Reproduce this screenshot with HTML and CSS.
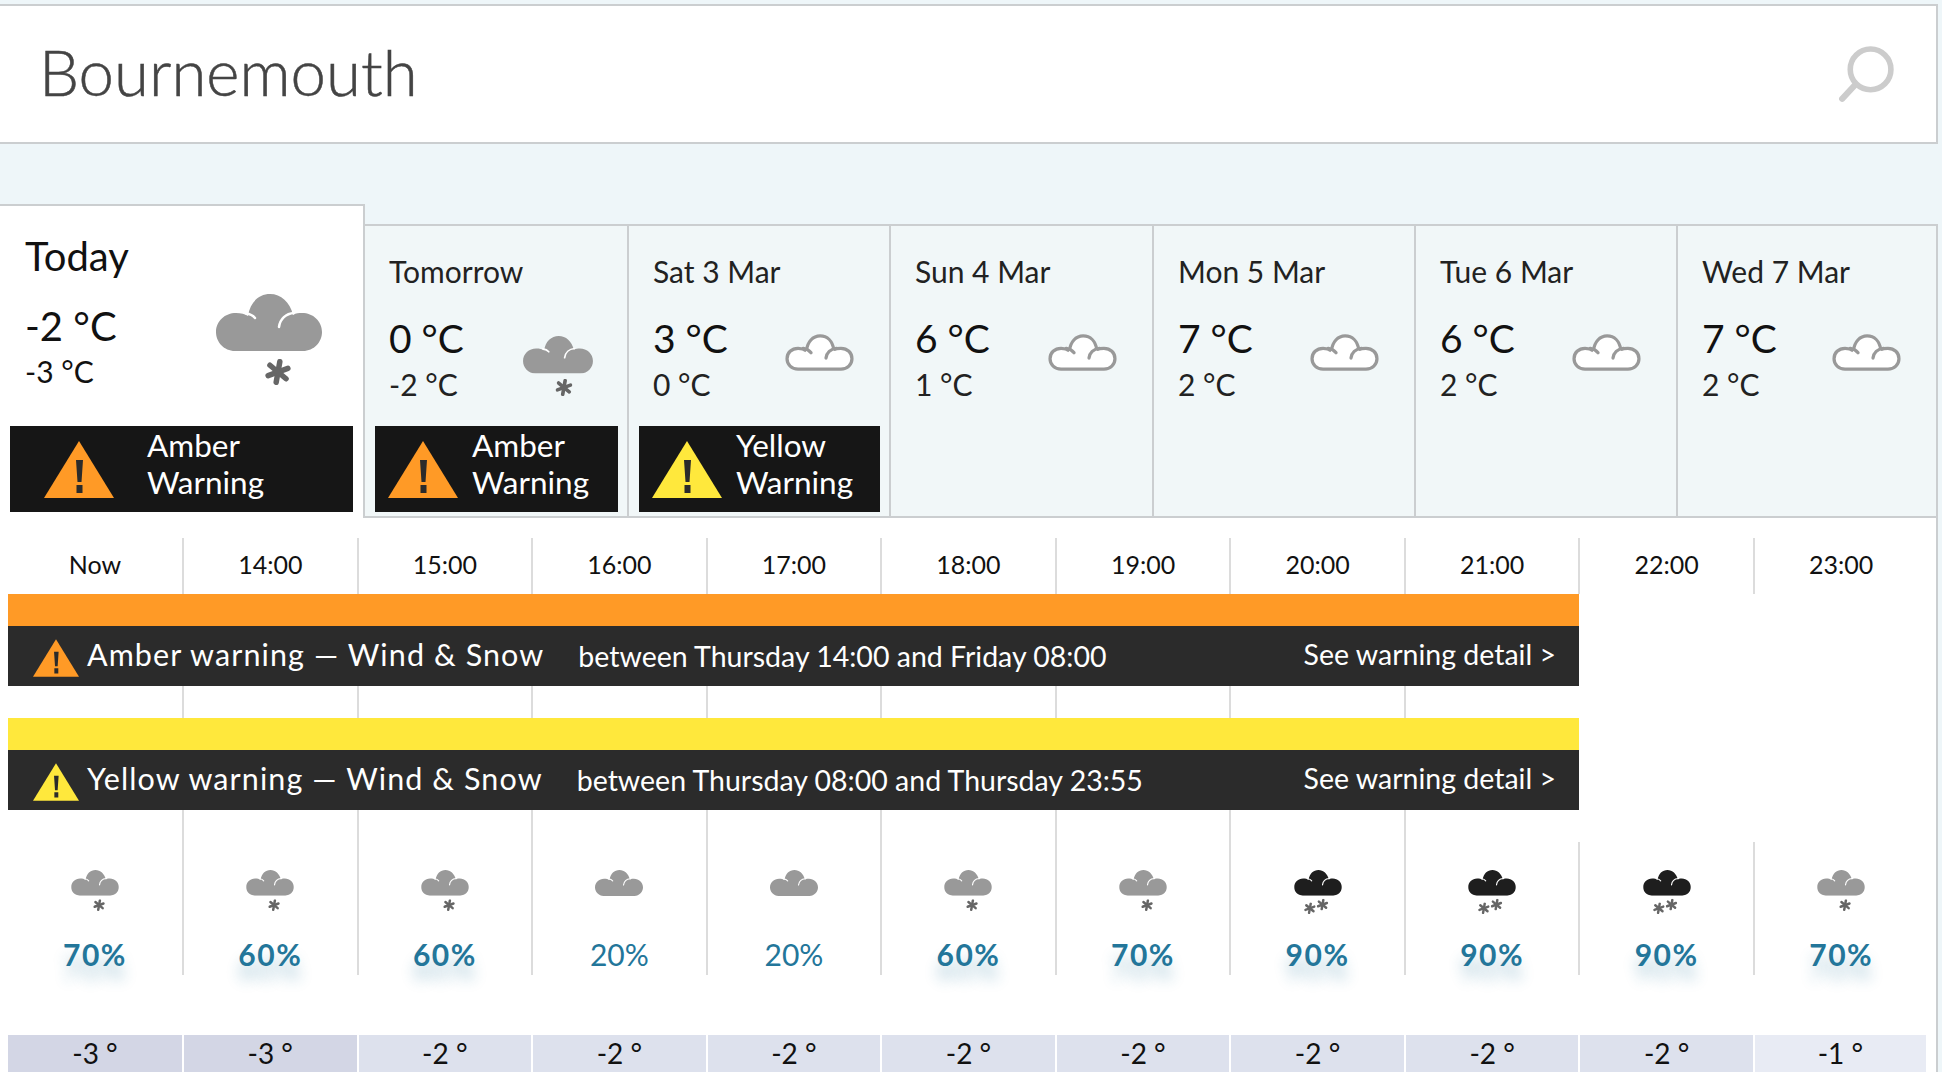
FILE: index.html

```html
<!DOCTYPE html>
<html lang="en">
<head>
  <meta charset="UTF-8">
  <title>Bournemouth forecast</title>
  <link rel="stylesheet" href="styles.css">
</head>
<body>
  <!-- shared icons -->
  <svg class="defs" width="0" height="0">
    <symbol id="cloud" viewBox="0 0 106 57">
      <path fill="currentColor" d="M19 57C8 57 0 48 0 38C0 27 9 19 20 19C25 19 29 20 32 22C34 8 43 0 54 0C65 0 74 8 77 21C80 19 83 19 86 19C97 19 106 27 106 38C106 48 98 57 87 57Z"/>
      <path fill="none" stroke="#fff" stroke-width="2.5" stroke-linecap="round" d="M30 19.5C34 20 37 21.5 39 24M63 33C64 25 70 19.5 78 19"/>
    </symbol>
    <symbol id="cloud-line" viewBox="0 0 106 57">
      <path fill="#fff" stroke="#999" stroke-width="5" d="M20 54C10 54 3 47 3 38C3 29 10 22 20 22C25 22 29 23 33 26C34 12 43 3 54 3C65 3 73 11 75 24C79 22 83 22 86 22C96 22 103 29 103 38C103 47 96 54 86 54Z"/>
      <path fill="none" stroke="#fff" stroke-width="6" d="M32 27L40 33M68 34L76 26"/>
      <path fill="none" stroke="#999" stroke-width="5" stroke-linecap="round" d="M28 22C33 23 37 25 40 29M63 37C64 29 70 23 79 22"/>
    </symbol>
    <symbol id="flake" viewBox="-13 -13 26 26">
      <g stroke="#666" stroke-width="5.5" stroke-linecap="round">
        <path d="M0 -10.5V10.5" transform="rotate(10)"/>
        <path d="M0 -10.5V10.5" transform="rotate(70)"/>
        <path d="M0 -10.5V10.5" transform="rotate(130)"/>
      </g>
    </symbol>
    <symbol id="snow" viewBox="0 0 106 100">
      <use href="#cloud" width="106" height="57"/>
      <use href="#flake" x="49" y="65" width="26" height="26"/>
    </symbol>
    <symbol id="snow-heavy" viewBox="0 0 106 100">
      <use href="#cloud" width="106" height="57"/>
      <use href="#flake" x="22" y="72" width="26" height="26"/>
      <use href="#flake" x="50" y="64" width="26" height="26"/>
    </symbol>
    <symbol id="tri" viewBox="0 0 70 57">
      <path fill="currentColor" d="M35 0L70 57H0Z"/>
      <path fill="#2b2b2b" d="M32 19H39L37.5 41H33.5ZM32.5 44H38.5V52H32.5Z"/>
    </symbol>
  </svg>

  <header class="search">
    <span class="search-text">Bournemouth</span>
    <svg class="search-icon" viewBox="0 0 56 60">
      <circle cx="33" cy="23" r="20" fill="none" stroke="#ccc" stroke-width="5.5"/>
      <path d="M18 38L5 52" stroke="#ccc" stroke-width="6" stroke-linecap="round"/>
    </svg>
  </header>

  <section class="days">
    <div class="day today">
      <div class="day-name">Today</div>
      <div class="day-body">
        <div class="temps">
          <div class="high">-2 °C</div>
          <div class="low">-3 °C</div>
        </div>
        <svg class="wx-big grey"><use href="#snow"/></svg>
      </div>
      <div class="alert">
        <svg class="alert-tri amber"><use href="#tri"/></svg>
        <span class="alert-text">Amber<br>Warning</span>
      </div>
    </div>
    <div class="day">
      <div class="day-name">Tomorrow</div>
      <div class="day-body">
        <div class="temps">
          <div class="high">0 °C</div>
          <div class="low">-2 °C</div>
        </div>
        <svg class="wx-mid grey"><use href="#snow"/></svg>
      </div>
      <div class="alert">
        <svg class="alert-tri amber"><use href="#tri"/></svg>
        <span class="alert-text">Amber<br>Warning</span>
      </div>
    </div>
    <div class="day">
      <div class="day-name">Sat 3 Mar</div>
      <div class="day-body">
        <div class="temps">
          <div class="high">3 °C</div>
          <div class="low">0 °C</div>
        </div>
        <svg class="wx-line"><use href="#cloud-line"/></svg>
      </div>
      <div class="alert">
        <svg class="alert-tri yellow"><use href="#tri"/></svg>
        <span class="alert-text">Yellow<br>Warning</span>
      </div>
    </div>
    <div class="day">
      <div class="day-name">Sun 4 Mar</div>
      <div class="day-body">
        <div class="temps">
          <div class="high">6 °C</div>
          <div class="low">1 °C</div>
        </div>
        <svg class="wx-line"><use href="#cloud-line"/></svg>
      </div>
    </div>
    <div class="day">
      <div class="day-name">Mon 5 Mar</div>
      <div class="day-body">
        <div class="temps">
          <div class="high">7 °C</div>
          <div class="low">2 °C</div>
        </div>
        <svg class="wx-line"><use href="#cloud-line"/></svg>
      </div>
    </div>
    <div class="day">
      <div class="day-name">Tue 6 Mar</div>
      <div class="day-body">
        <div class="temps">
          <div class="high">6 °C</div>
          <div class="low">2 °C</div>
        </div>
        <svg class="wx-line"><use href="#cloud-line"/></svg>
      </div>
    </div>
    <div class="day">
      <div class="day-name">Wed 7 Mar</div>
      <div class="day-body">
        <div class="temps">
          <div class="high">7 °C</div>
          <div class="low">2 °C</div>
        </div>
        <svg class="wx-line"><use href="#cloud-line"/></svg>
      </div>
    </div>
  </section>

  <main class="hourly">
    <div class="row hours">
      <div class="cell">Now</div>
      <div class="cell">14:00</div>
      <div class="cell">15:00</div>
      <div class="cell">16:00</div>
      <div class="cell">17:00</div>
      <div class="cell">18:00</div>
      <div class="cell">19:00</div>
      <div class="cell">20:00</div>
      <div class="cell">21:00</div>
      <div class="cell">22:00</div>
      <div class="cell">23:00</div>
    </div>

    <div class="warning">
      <div class="stripe amber-bg"></div>
      <div class="warning-bar">
        <svg class="warning-tri amber"><use href="#tri"/></svg>
        <span class="warning-title">Amber warning — Wind &amp; Snow</span>
        <span class="warning-when">between Thursday 14:00 and Friday 08:00</span>
        <span class="warning-link">See warning detail &gt;</span>
      </div>
    </div>

    <div class="row spacer">
      <div class="cell"></div><div class="cell"></div><div class="cell"></div>
      <div class="cell"></div><div class="cell"></div><div class="cell"></div>
      <div class="cell"></div><div class="cell"></div><div class="cell"></div>
    </div>

    <div class="warning">
      <div class="stripe yellow-bg"></div>
      <div class="warning-bar">
        <svg class="warning-tri yellow"><use href="#tri"/></svg>
        <span class="warning-title">Yellow warning — Wind &amp; Snow</span>
        <span class="warning-when">between Thursday 08:00 and Thursday 23:55</span>
        <span class="warning-link">See warning detail &gt;</span>
      </div>
    </div>

    <div class="row chances">
      <div class="cell chance"><svg class="wx-small grey"><use href="#snow"/></svg><span class="pct strong">70%</span></div>
      <div class="cell chance"><svg class="wx-small grey"><use href="#snow"/></svg><span class="pct strong">60%</span></div>
      <div class="cell chance"><svg class="wx-small grey"><use href="#snow"/></svg><span class="pct strong">60%</span></div>
      <div class="cell chance"><svg class="wx-small grey"><use href="#cloud" width="48" height="26"/></svg><span class="pct">20%</span></div>
      <div class="cell chance"><svg class="wx-small grey"><use href="#cloud" width="48" height="26"/></svg><span class="pct">20%</span></div>
      <div class="cell chance"><svg class="wx-small grey"><use href="#snow"/></svg><span class="pct strong">60%</span></div>
      <div class="cell chance"><svg class="wx-small grey"><use href="#snow"/></svg><span class="pct strong">70%</span></div>
      <div class="cell chance"><svg class="wx-small dark"><use href="#snow-heavy"/></svg><span class="pct strong">90%</span></div>
      <div class="cell chance"><svg class="wx-small dark"><use href="#snow-heavy"/></svg><span class="pct strong">90%</span></div>
      <div class="cell chance short"><svg class="wx-small dark"><use href="#snow-heavy"/></svg><span class="pct strong">90%</span></div>
      <div class="cell chance short"><svg class="wx-small grey"><use href="#snow"/></svg><span class="pct strong">70%</span></div>
    </div>

    <div class="row feels">
      <div class="feel t-3">-3 °</div>
      <div class="feel t-3">-3 °</div>
      <div class="feel t-2">-2 °</div>
      <div class="feel t-2">-2 °</div>
      <div class="feel t-2">-2 °</div>
      <div class="feel t-2">-2 °</div>
      <div class="feel t-2">-2 °</div>
      <div class="feel t-2">-2 °</div>
      <div class="feel t-2">-2 °</div>
      <div class="feel t-2">-2 °</div>
      <div class="feel t-1">-1 °</div>
    </div>
  </main>
</body>
</html>
```

FILE: styles.css

```css
html, body {
  margin: 0;
  padding: 0;
  height: 1072px;
  overflow: hidden;
  background-color: #eef6f9;
  font-family: "Lato", "Liberation Sans", sans-serif;
  color: #111;
}
.defs {
  display: block;
  height: 0;
}
.search {
  box-sizing: border-box;
  width: 1938px;
  height: 140px;
  margin-top: 4px;
  padding: 0 42px 0 39px;
  display: flex;
  align-items: center;
  justify-content: space-between;
  background-color: white;
  border: 2px solid #cbced0;
  border-left: 0;
}
.search-text {
  padding-bottom: 6px;
  font-size: 63.5px;
  font-weight: 300;
  color: #444;
  -webkit-text-stroke: 0.5px #444;
}
.search-icon {
  width: 57px;
  height: 61px;
  margin-top: 4px;
}

/* day tabs */
.days {
  width: 1938px;
  margin-top: 60px;
  display: grid;
  grid-template-columns: 365px 264px 262px 263px 262px 262px 260px;
  height: 314px;
}
.day {
  box-sizing: border-box;
  margin-top: 20px;
  padding: 0 0 4px 24px;
  display: flex;
  flex-direction: column;
  background-color: #f1f7f8;
  border-top: 2px solid #cbced0;
  border-right: 2px solid #cbced0;
  border-bottom: 2px solid #cbced0;
}
.day-name {
  margin-top: 28px;
  font-size: 30px;
  line-height: 34px;
  color: #222;
}
.day-body {
  display: flex;
  justify-content: space-between;
  align-items: flex-start;
  margin-top: 28px;
  padding-right: 35px;
}
.high {
  font-size: 39px;
  line-height: 44px;
}
.low {
  margin-top: 7px;
  font-size: 30px;
  line-height: 34px;
  color: #222;
}
.today {
  margin-top: 0;
  padding: 0 0 6px 25px;
  background-color: white;
  border-bottom: 0;
}
.today .day-name {
  margin-top: 28px;
  font-size: 40px;
  line-height: 44px;
  color: #111;
}
.today .day-body {
  margin-top: 26px;
  padding-right: 41px;
}
.today .high {
  font-size: 40px;
}
.today .low {
  margin-top: 6px;
  color: #111;
}
.wx-big {
  width: 106px;
  height: 100px;
  margin-top: -10px;
}
.wx-mid {
  width: 70px;
  height: 66px;
  margin-top: 20px;
  margin-right: -1px;
}
.wx-line {
  width: 69px;
  height: 37px;
  margin-top: 18px;
}
.wx-small {
  display: block;
  width: 48px;
  height: 45px;
  margin: 0 auto;
}
.grey { color: #999; }
.dark { color: #1e1e1e; }
.amber { color: #ff9a26; }
.yellow { color: #ffe83c; }
.amber-bg { background-color: #ff9a26; }
.yellow-bg { background-color: #ffe83c; }

.alert {
  box-sizing: border-box;
  margin-top: auto;
  margin-left: -14px;
  margin-right: 9px;
  height: 86px;
  padding-left: 13px;
  display: flex;
  align-items: center;
  gap: 14px;
  background-color: #161616;
  color: white;
}
.today .alert {
  margin-left: -15px;
  margin-right: 10px;
  padding-left: 34px;
  gap: 33px;
}
.alert-tri {
  width: 70px;
  height: 57px;
}
.alert-text {
  padding-bottom: 10px;
  font-size: 31.5px;
  line-height: 37px;
}

/* hourly table */
.hourly {
  box-sizing: border-box;
  width: 1938px;
  height: 554px;
  padding: 20px 0 0 8px;
  background-color: white;
  border-right: 2px solid #cbced0;
}
.row {
  display: grid;
  grid-template-columns: 174px repeat(10, 174.55px);
}
.cell {
  box-sizing: border-box;
  border-left: 2px solid #dcdcdc;
  text-align: center;
}
.cell:first-child {
  border-left: 0;
}
.hours .cell {
  height: 56px;
  font-size: 25px;
  line-height: 52px;
}
.spacer .cell {
  height: 32px;
}
.warning {
  width: 1571px;
}
.stripe {
  height: 32px;
}
.warning-bar {
  box-sizing: border-box;
  height: 60px;
  padding: 0 23px 5px 25px;
  display: flex;
  align-items: center;
  background-color: #2b2b2b;
  color: white;
}
.warning-tri {
  width: 46px;
  height: 38px;
  margin-top: 8px;
}
.warning-title {
  margin-left: 8px;
  font-size: 30.5px;
  letter-spacing: 1.1px;
}
.warning-when {
  margin-left: 34px;
  padding-top: 4px;
  font-size: 28.5px;
}
.warning-link {
  margin-left: auto;
  font-size: 28.5px;
}
.chances .chance {
  height: 165px;
  padding-top: 60px;
}
.chances .short {
  height: 133px;
  margin-top: 32px;
  padding-top: 28px;
}
.pct {
  display: block;
  margin-top: 22px;
  font-size: 30px;
  line-height: 34px;
  color: #23769a;
}
.pct.strong {
  font-weight: 700;
  letter-spacing: 1.5px;
  text-shadow: 0 14px 14px rgba(35, 118, 154, 0.32);
}
.feels {
  margin-top: 60px;
  grid-template-columns: 176px repeat(9, 174.55px) 171px;
}
.feel {
  box-sizing: border-box;
  height: 37px;
  margin-right: 2px;
  font-size: 28px;
  line-height: 36px;
  text-align: center;
}
.feel:last-child {
  margin-right: 0;
}
.t-3 { background-color: #d3d6e5; }
.t-2 { background-color: #dde1ed; }
.t-1 { background-color: #e8ebf4; }
```
